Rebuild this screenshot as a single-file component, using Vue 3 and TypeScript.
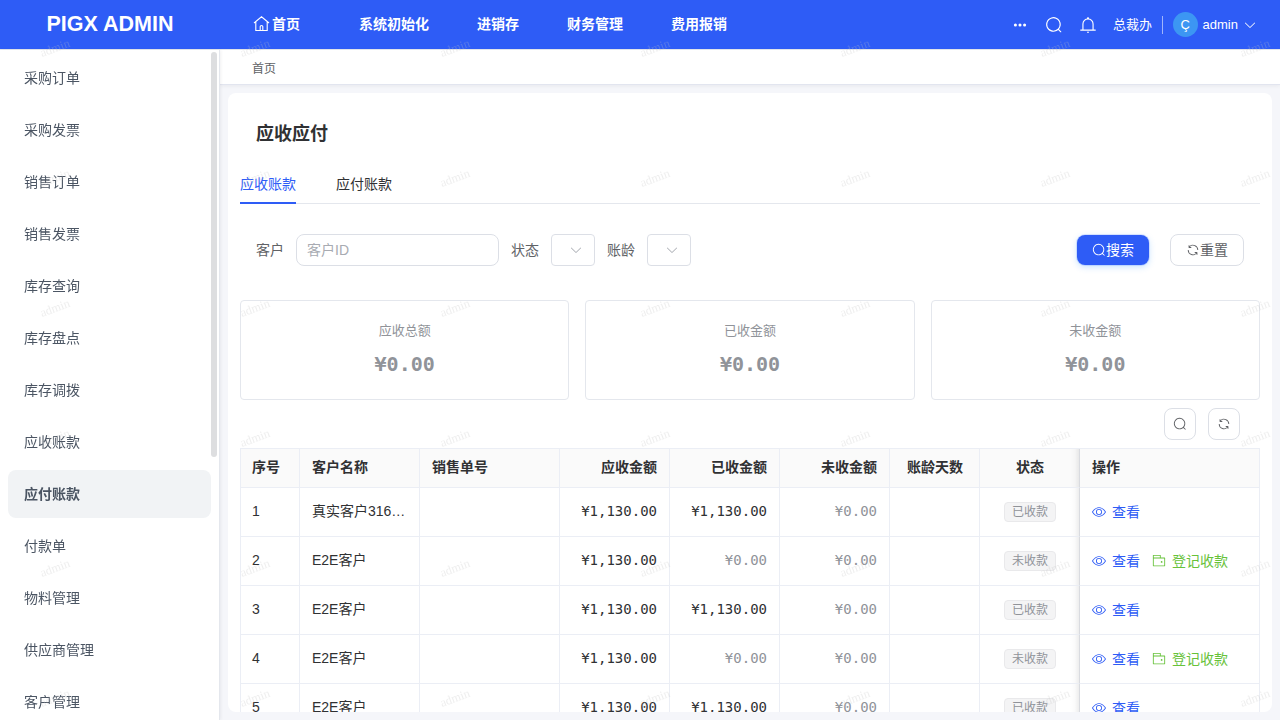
<script setup lang="ts">
interface Row { id: number; name: string; total: string; paid: string; status: string; open: boolean }

const icons: Record<string, string> = {
  search: 'm795.904 750.72 124.608 124.608a32 32 0 0 1-45.248 45.248L750.656 795.904a416 416 0 1 1 45.248-45.248zM480 832a352 352 0 1 0 0-704 352 352 0 0 0 0 704z',
  refresh: 'M771.776 794.88A384 384 0 0 1 128 512h64a320 320 0 0 0 555.712 216.448H654.72a32 32 0 1 1 0-64h149.056a32 32 0 0 1 32 32v148.928a32 32 0 1 1-64 0v-50.56zM276.288 295.616h92.992a32 32 0 0 1 0 64H220.16a32 32 0 0 1-32-32V178.56a32 32 0 0 1 64 0v50.56A384 384 0 0 1 896.128 512h-64a320 320 0 0 0-555.776-216.384z',
  down: 'M831.872 340.864 512 652.672 192.128 340.864a30.592 30.592 0 0 0-42.752 0 29.12 29.12 0 0 0 0 41.6L489.664 714.24a32 32 0 0 0 44.672 0l340.288-331.712a29.12 29.12 0 0 0 0-41.728 30.592 30.592 0 0 0-42.752 0z',
  view: 'M512 160c320 0 512 352 512 352S832 864 512 864 0 512 0 512s192-352 512-352zm0 64c-225.28 0-384.128 208.064-436.8 288 52.608 79.872 211.456 288 436.8 288 225.28 0 384.128-208.064 436.8-288-52.608-79.872-211.456-288-436.8-288zm0 64a224 224 0 1 1 0 448 224 224 0 0 1 0-448zm0 64a160.192 160.192 0 0 0-160 160c0 88.192 71.744 160 160 160s160-71.808 160-160-71.744-160-160-160z',
  wallet: 'M640 288h-64V128H128v704h768V320H128v-64h800a32 32 0 0 1 32 32v576a32 32 0 0 1-32 32H96a32 32 0 0 1-32-32V96a32 32 0 0 1 32-32h512a32 32 0 0 1 32 32v192zM704 640a64 64 0 1 1 0-128 64 64 0 0 1 0 128z',
  bell: 'M512 64a64 64 0 0 1 64 64v64H448v-64a64 64 0 0 1 64-64zM256 768h512V448a256 256 0 1 0-512 0v320zm256-640a320 320 0 0 1 320 320v384H192V448a320 320 0 0 1 320-320zM96 768h832q32 0 32 32t-32 32H96q-32 0-32-32t32-32zm352 128h128a64 64 0 0 1-128 0z',
  more: 'M176 400a112 112 0 1 1 0 224 112 112 0 0 1 0-224zm336 0a112 112 0 1 1 0 224 112 112 0 0 1 0-224zm336 0a112 112 0 1 1 0 224 112 112 0 0 1 0-224z',
}

const topMenu = ['系统初始化', '进销存', '财务管理', '费用报销']
const sideMenu = ['采购订单', '采购发票', '销售订单', '销售发票', '库存查询', '库存盘点', '库存调拨', '应收账款', '应付账款', '付款单', '物料管理', '供应商管理', '客户管理']
const activeSide = '应付账款'
const totals = ['应收总额', '已收金额', '未收金额']
const headers = ['序号', '客户名称', '销售单号', '应收金额', '已收金额', '未收金额', '账龄天数', '状态', '操作']
const full = '¥1,130.00'
const zero = '¥0.00'
const rows: Row[] = [
  { id: 1, name: '真实客户316…', total: full, paid: full, status: '已收款', open: false },
  { id: 2, name: 'E2E客户', total: full, paid: zero, status: '未收款', open: true },
  { id: 3, name: 'E2E客户', total: full, paid: full, status: '已收款', open: false },
  { id: 4, name: 'E2E客户', total: full, paid: zero, status: '未收款', open: true },
  { id: 5, name: 'E2E客户', total: full, paid: full, status: '已收款', open: false },
]
const marks = Array.from({ length: 42 }, (_, i) => ({ x: 55 + (i % 7) * 200, y: 48 + Math.floor(i / 7) * 130 }))
</script>

<template>
  <div class="app">
    <header class="header">
      <div class="logo">PIGX ADMIN</div>
      <nav class="topnav">
        <a class="home">
          <svg class="home-icon" viewBox="0 0 18 18" fill="none" stroke="currentColor" stroke-width="1.1"><path d="M1.500 8 9 1.800 16.500 8M3.300 6.800V15.500H14.700V6.800M7.700 15.500V11.500Q7.700 10.500 9 10.500T10.300 11.500V15.500" /></svg>
          <span>首页</span>
        </a>
        <a v-for="m in topMenu" :key="m">{{ m }}</a>
      </nav>
      <div class="tools">
        <svg class="i14" viewBox="0 0 1024 1024"><path :d="icons.more" /></svg>
        <svg class="i18 t-search" viewBox="0 0 1024 1024"><path :d="icons.search" /></svg>
        <svg class="i18 t-bell" viewBox="0 0 1024 1024"><path :d="icons.bell" /></svg>
        <span class="dept">总裁办</span>
        <i class="divider"></i>
        <span class="avatar">Ç</span>
        <span class="user">admin</span>
        <svg class="i14 t-down" viewBox="0 0 1024 1024"><path :d="icons.down" /></svg>
      </div>
    </header>
    <div class="body">
      <aside class="side">
        <div class="side-list">
          <a v-for="s in sideMenu" :key="s" :class="{ active: s === activeSide }">{{ s }}</a>
        </div>
        <i class="scrollbar"></i>
      </aside>
      <div class="content">
        <div class="crumb">首页</div>
        <main class="panel">
          <h1>应收应付</h1>
          <div class="tabs"><a class="on">应收账款</a><a>应付账款</a></div>
          <div class="filter">
            <label class="first">客户</label>
            <div class="input">客户ID</div>
            <label>状态</label>
            <div class="select"><svg class="i14" viewBox="0 0 1024 1024"><path :d="icons.down" /></svg></div>
            <label>账龄</label>
            <div class="select"><svg class="i14" viewBox="0 0 1024 1024"><path :d="icons.down" /></svg></div>
            <button class="primary"><svg class="i14" viewBox="0 0 1024 1024"><path :d="icons.search" /></svg>搜索</button>
            <button class="plain"><svg class="i14" viewBox="0 0 1024 1024"><path :d="icons.refresh" /></svg>重置</button>
          </div>
          <div class="cards">
            <div v-for="t in totals" :key="t" class="card"><span>{{ t }}</span><b>¥0.00</b></div>
          </div>
          <div class="toolbar">
            <button><svg class="i14" viewBox="0 0 1024 1024"><path :d="icons.search" /></svg></button>
            <button><svg class="i14" viewBox="0 0 1024 1024"><path :d="icons.refresh" /></svg></button>
          </div>
          <div class="table">
            <div class="tr th">
              <div v-for="(h, i) in headers" :key="h" :class="['td', { num: i >= 3 && i <= 5, mid: i === 6 || i === 7, fixed: i === 8 }]">{{ h }}</div>
            </div>
            <div v-for="r in rows" :key="r.id" class="tr">
              <div class="td">{{ r.id }}</div>
              <div class="td">{{ r.name }}</div>
              <div class="td"></div>
              <div class="td num mono">{{ r.total }}</div>
              <div :class="['td num mono', { dim: r.paid === zero }]">{{ r.paid }}</div>
              <div class="td num mono dim">{{ zero }}</div>
              <div class="td"></div>
              <div class="td mid"><span class="tag">{{ r.status }}</span></div>
              <div class="td fixed">
                <a class="view"><svg class="i14" viewBox="0 0 1024 1024"><path :d="icons.view" /></svg>查看</a>
                <a v-if="r.open" class="pay"><svg class="i14" viewBox="0 0 1024 1024"><path :d="icons.wallet" /></svg>登记收款</a>
              </div>
            </div>
          </div>
        </main>
      </div>
    </div>
    <svg class="watermark" viewBox="0 0 1280 720">
      <text v-for="(m, i) in marks" :key="i" text-anchor="middle" :transform="`translate(${m.x} ${m.y}) rotate(-20)`" y="4">admin</text>
    </svg>
  </div>
</template>

<style>
html, body { margin: 0; overflow: hidden; }
</style>
<style scoped>
* { box-sizing: border-box; }
.app { position: relative; width: 1280px; height: 720px; overflow: hidden; display: flex; flex-direction: column; background: #f5f6fa; color: #303133; font: 14px/22px "Liberation Sans", "Noto Sans CJK SC", sans-serif; }
svg { display: block; flex: none; fill: currentColor; }
.i14 { width: 14px; height: 14px; }
.i18 { width: 18px; height: 18px; }
.header { height: 50px; flex: none; display: flex; align-items: center; background: #2e5cf6; color: #fff; border-bottom: 1px solid #e4e7ed; }
.logo { width: 220px; text-align: center; font-size: 21.500px; font-weight: 700; line-height: 48px; padding-bottom: 2px; }
.topnav { display: flex; gap: 48px; padding: 0 0 1px 32px; font-weight: 700; }
.home { display: flex; align-items: center; gap: 1px; margin-right: 11px; }
.home-icon { width: 19px; height: 18px; fill: none; }
.tools { margin-left: auto; display: flex; align-items: center; padding-right: 23px; font-size: 13px; }
.t-search { margin-left: 18px; }
.t-bell { margin-left: 16px; }
.dept { margin: 0 -.5px 0 16.5px; }
.divider { width: 1px; height: 18px; background: rgba(255,255,255,.55); margin: 0 10px; }
.avatar { width: 25px; height: 25px; border-radius: 50%; background: #3c96f3; text-align: center; line-height: 26px; }
.user { margin-left: 5px; }
.t-down { margin-left: 5px; }
.body { flex: 1; min-height: 0; display: flex; }
.side { position: relative; width: 220px; flex: none; background: #fff; border-right: 1px solid #e4e7ed; box-shadow: 1px 0 3px rgba(0,21,41,.06); }
.side-list { height: 670px; overflow: hidden; display: flex; flex-direction: column; gap: 4px; padding: 4px 8px 0; }
.side-list a { flex: none; width: 203px; height: 48px; line-height: 48px; padding-left: 16px; border-radius: 8px; color: #4b5563; will-change: transform; }
.side-list .active { background: #f1f3f5; font-weight: 700; }
.scrollbar { position: absolute; left: 211px; top: 2px; width: 6px; height: 405px; border-radius: 3px; background: #dddee0; }
.content { flex: 1; min-width: 0; display: flex; flex-direction: column; }
.crumb { height: 35px; flex: none; padding-left: 32px; background: #fff; border-bottom: 1px solid #e2e5ef; box-shadow: 0 1px 4px rgba(0,21,41,.06); font-size: 12px; line-height: 38px; color: #606266; }
.panel { margin: 8px 8px 8px; flex: 1; min-height: 0; overflow: hidden; background: #fff; border-radius: 8px; padding: 0 12px; }
h1 { margin: 0; height: 72px; padding: 29px 16px 0; font-size: 18px; line-height: 24px; font-weight: 700; }
.tabs { height: 39px; display: flex; gap: 40px; border-bottom: 1px solid #e4e7ed; line-height: 38px; }
.tabs a { height: 39px; }
.tabs .on { color: #2e5cf6; border-bottom: 2px solid #2e5cf6; }
.filter { height: 32px; margin: 30px 16px 34px; display: flex; align-items: center; color: #606266; }
.filter label { margin-right: 12px; }
.input { width: 203px; height: 32px; margin-right: 12px; border: 1px solid #dcdfe6; border-radius: 8px; padding-left: 10px; line-height: 30px; color: #a8abb2; }
.select { width: 44px; height: 32px; margin-right: 12px; border: 1px solid #dcdfe6; border-radius: 4px; padding: 8px 0 0 17px; color: #a8abb2; }
button { height: 32px; border: 1px solid #dcdfe6; border-radius: 8px; background: #fff; color: #606266; display: flex; align-items: center; justify-content: center; font: inherit; padding: 0; }
.primary { width: 72px; height: 30px; margin-left: auto; border: 0; background: #2e5cf6; color: #fff; box-shadow: 0 0 0 1px rgba(46,92,246,.15), 0 2px 6px rgba(64,158,255,.3); }
.plain { width: 74px; margin-left: 21px; }
.cards { display: grid; grid-template-columns: repeat(3, 1fr); gap: 16px; }
.card { height: 100px; border: 1px solid #e4e7ed; border-radius: 4px; display: flex; flex-direction: column; align-items: center; color: #909399; }
.card span { margin-top: 19px; font-size: 13px; }
.card b { margin-top: 7px; font: 700 20px/30px "DejaVu Sans Mono", monospace; }
.toolbar { display: flex; justify-content: flex-end; gap: 12px; padding: 8px 20px 8px 0; }
.toolbar button { width: 32px; }
.table { border-top: 1px solid #ebeef5; border-left: 1px solid #ebeef5; }
.tr { display: grid; grid-template-columns: 59px 120px 140px 110px 110px 110px 90px 100px 180px; height: 49px; }
.td { border-right: 1px solid #ebeef5; border-bottom: 1px solid #ebeef5; padding: 0 12px; line-height: 46px; white-space: nowrap; min-width: 0; }
.td:first-child { padding-left: 11px; }
.td:nth-child(8) { padding: 0 11px 0 12px; border-right-color: transparent; background: linear-gradient(90deg, transparent 90px, rgba(0,0,0,.02) 95px, rgba(0,0,0,.07) 99px) no-repeat border-box; }
.th { height: 39px; background: #fafafa; font-weight: 700; }
.th .td { line-height: 36px; }
.th .td:nth-child(7) { padding: 0 11px 0 12px; }
.num { text-align: right; }
.mid { text-align: center; }
.mono { font-family: "DejaVu Sans Mono", monospace; }
.dim { color: #909399; }
.fixed { border-left: 1px solid #d9dbe0; margin-left: -1px; display: flex; gap: 12px; }
.fixed a { display: flex; align-items: center; gap: 6px; line-height: 48px; }
.view { color: #2e5cf6; }
.pay { color: #67c23a; }
.tag { display: inline-block; height: 20px; line-height: 18px; padding: 0 7px; border: 1px solid #e9e9eb; border-radius: 4px; background: #f4f4f5; color: #909399; font-size: 12px; vertical-align: middle; }
.watermark { position: absolute; inset: 0; width: 1280px; height: 720px; pointer-events: none; fill: rgba(195,195,195,.28); font: 12.3px "Liberation Serif", serif; }
</style>
